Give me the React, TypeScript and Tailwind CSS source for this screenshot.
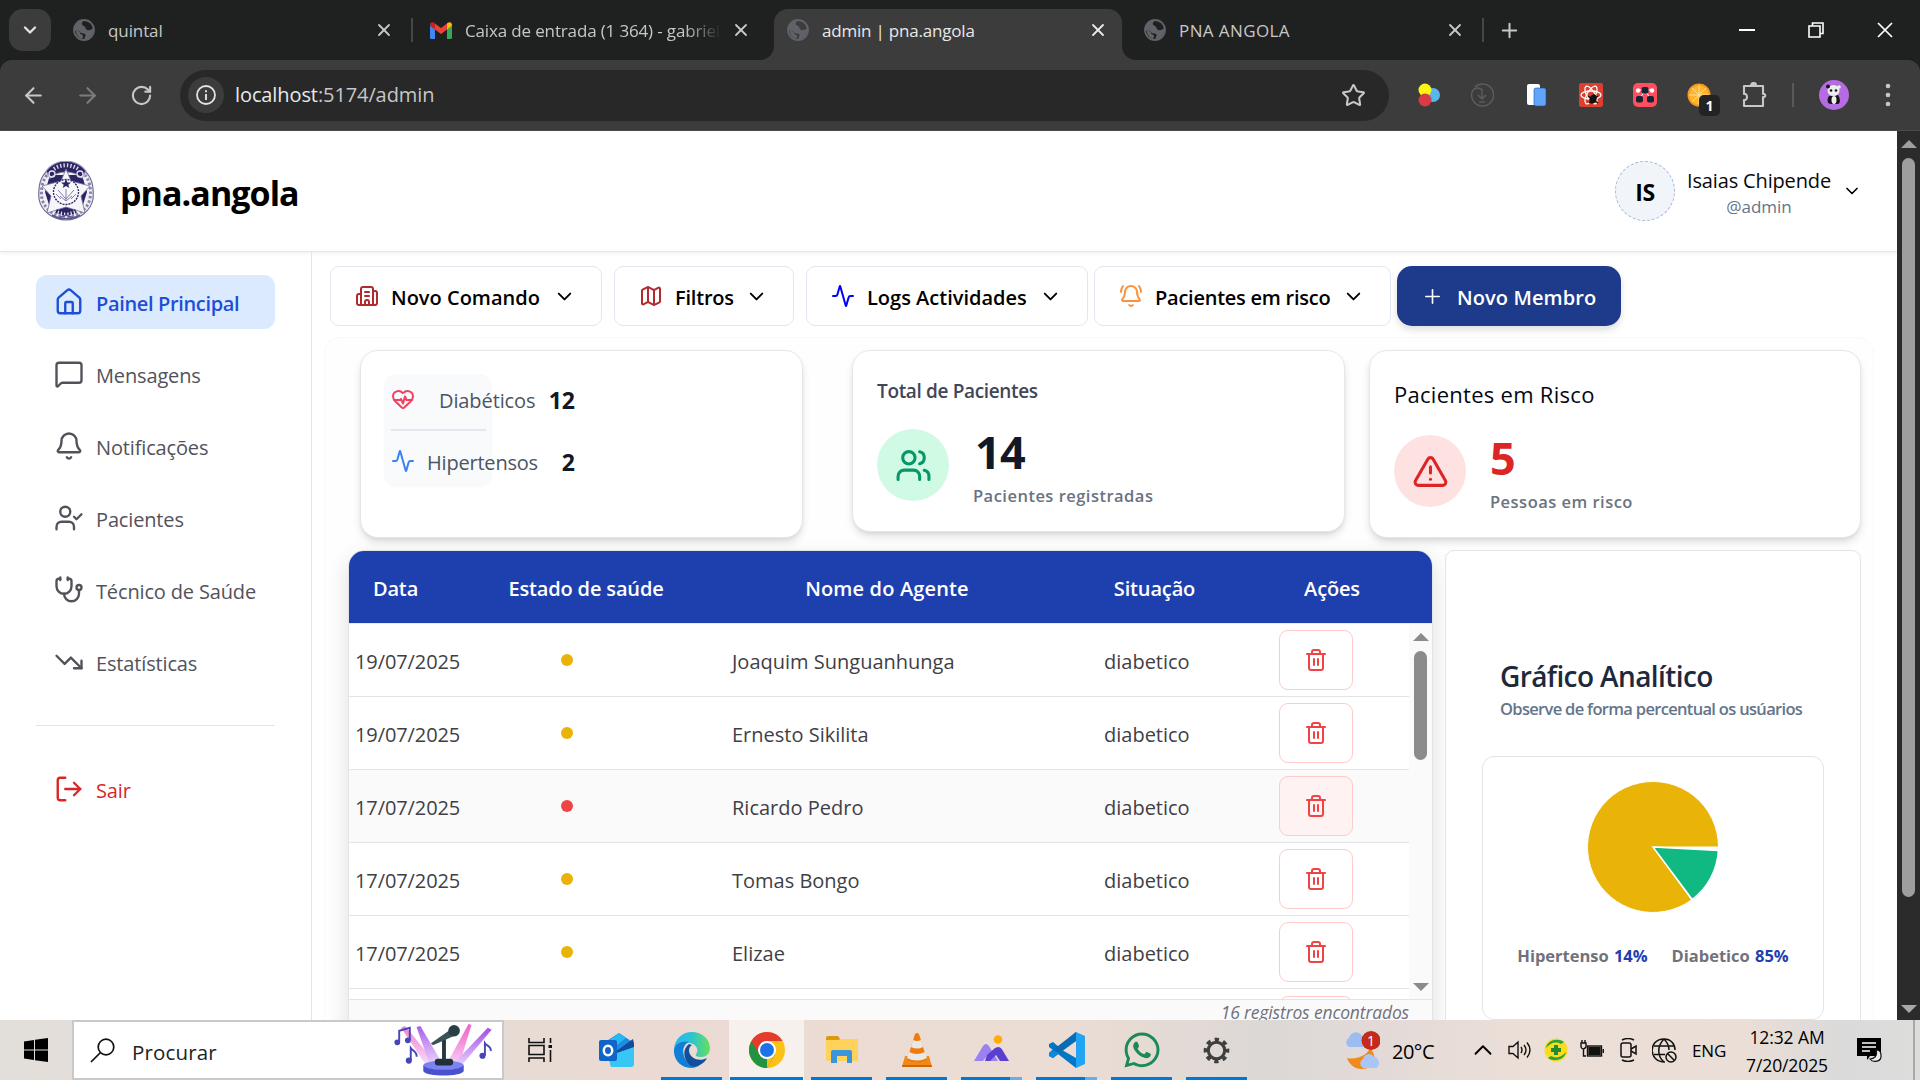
import React from "react";
import {
  Activity, ArrowLeft, ArrowRight, Bell, BellRing, Building2, ChevronDown, ChevronUp, HeartPulse, House,
  LogOut, Map as MapIcon, MessageSquare, Plus, RotateCw, Star, Stethoscope, Trash2,
  TrendingDown, TriangleAlert, UserCheck, Users, X,
} from "lucide-react";
import { FaWhatsapp } from "react-icons/fa";

const BrowserGlobe = () => (
  <svg className="size-[22px] shrink-0" viewBox="0 0 22 22">
    <circle cx="11" cy="11" r="10" fill="none" stroke="#5f6368" strokeWidth="1.8" />
    <path d="M12 1c-4 2-4 5-1 6 2 1 1 3 3 4 3 1 5-1 6-2 1 6-3 11-8 12-2-2 2-4 0-6-2-1-4 0-5-2-1-2-4-1-6-1C1 5 6 0 12 1Z" fill="#5f6368" />
    <path d="M3 12c2 0 4 0 4 2s3 1 3 3-1 2-1 3c-3-1-6-4-6-8Z" fill="#5f6368" />
  </svg>
);

const Gmail = () => (
  <svg className="h-[17px] w-[22px] shrink-0" viewBox="0 0 22 17">
    <path d="M0 3v12.5A1.5 1.5 0 0 0 1.500 17H5V7Z" fill="#4285f4" />
    <path d="M22 3v12.500a1.500 1.500 0 0 1-1.500 1.500H17V7Z" fill="#34a853" />
    <path d="M5 1.500 11 6l6-4.500V7.500l-6 4.500-6-4.500Z" fill="#ea4335" />
    <path d="M0 3C0 .5 2.500-.5 4.500 1L5 1.500v6L0 3.800Z" fill="#c5221f" />
    <path d="M22 3c0-2.500-2.500-3.500-4.500-2L17 1.500v6l5-3.700Z" fill="#fbbc04" />
  </svg>
);

function Tab({ icon, title, cls, textCls }: { icon: React.ReactNode; title: string; cls: string; textCls: string }) {
  return (
    <div className={"flex h-[42px] w-[321px] items-center " + cls}>
      {icon}
      <span className={"relative top-[1px] ml-[13px] min-w-0 flex-1 overflow-hidden whitespace-nowrap text-[17px] " + textCls}>{title}</span>
      <X size={20} strokeWidth={2.2} className="ml-[10px] shrink-0" />
    </div>
  );
}

const Sep = ({ cls }: { cls: string }) => <div className={"w-[2px] shrink-0 " + cls} />;

function Browser() {
  return (
    <header className="h-[131px] bg-[#1f2120]">
      <div className="flex h-[60px] pt-[9px]">
        <div className="ml-[9px] flex size-[42px] items-center justify-center rounded-[14px] bg-[#3c3c3c] text-[#e3e3e3]">
          <ChevronDown size={20} strokeWidth={2.8} />
        </div>
        <Tab icon={<BrowserGlobe />} title="quintal" cls="ml-[22px] text-[#c7c7c7]" textCls="tracking-[-0.1px]" />
        <Sep cls="ml-[17px] mt-[9px] h-6 bg-[#454746]" />
        <Tab icon={<Gmail />} title="Caixa de entrada (1 364) - gabriel" cls="ml-[17px] text-[#c7c7c7]" textCls="tracking-[-0.15px] [mask-image:linear-gradient(to_right,black_86%,transparent)]" />
        <div className="relative ml-[23px] rounded-t-[14px] bg-[#3c3c3c] pl-[13px] pr-[14px]">
          <svg className="absolute bottom-0 -left-[14px] size-[14px]" viewBox="0 0 14 14"><path d="M14 0v14H0A14 14 0 0 0 14 0Z" fill="#3c3c3c" /></svg>
          <svg className="absolute bottom-0 -right-[14px] size-[14px]" viewBox="0 0 14 14"><path d="M0 0v14h14A14 14 0 0 1 0 0Z" fill="#3c3c3c" /></svg>
          <Tab icon={<BrowserGlobe />} title="admin | pna.angola" cls="text-[#e8e8e8]" textCls="tracking-[-0.2px]" />
        </div>
        <Tab icon={<BrowserGlobe />} title="PNA ANGOLA" cls="ml-[22px] text-[#c7c7c7]" textCls="tracking-[0.4px]" />
        <Sep cls="ml-[17px] mt-[9px] h-6 bg-[#454746]" />
        <Plus size={23} strokeWidth={2.1} className="ml-[14px] mt-[10px] text-[#c7c7c7]" />
        <div className="ml-auto flex h-[42px] items-center gap-[53px] pr-[27px]">
          <svg className="h-4 w-4" viewBox="0 0 16 16"><path d="M0 8h16" stroke="white" strokeWidth="2" /></svg>
          <svg className="h-4 w-4" viewBox="0 0 16 16" fill="none" stroke="white" strokeWidth="1.600"><path d="M1 4h11v11H1zM4.500 4V1H15v10.500h-3" /></svg>
          <svg className="h-4 w-4" viewBox="0 0 16 16"><path d="m1 1 14 14M15 1 1 15" stroke="white" strokeWidth="1.700" /></svg>
        </div>
      </div>
      <div className="flex h-[71px] items-center rounded-t-[12px] border-b border-[#4b4b4b] bg-[#3c3c3c] text-[#c7c7c7]">
        <ArrowLeft size={25} strokeWidth={2} className="ml-[21px]" />
        <ArrowRight size={25} strokeWidth={2} className="ml-[29px] text-[#7c7c7c]" />
        <RotateCw size={23} strokeWidth={2.2} className="ml-[30px]" />
        <div className="ml-[27px] flex h-[51px] w-[1209px] items-center rounded-full bg-[#282828] pl-[8px]">
          <div className="flex size-[36px] items-center justify-center rounded-full bg-[#3c3c3c]">
            <svg className="size-[20px]" viewBox="0 0 20 20"><circle cx="10" cy="10" r="9" fill="none" stroke="#e3e3e3" strokeWidth="1.800" /><path d="M10 9v6M10 5.200v2" stroke="#e3e3e3" strokeWidth="1.900" /></svg>
          </div>
          <span className="ml-[11px] text-[20px] tracking-[-0.1px]"><span className="text-[#e8e8e8]">localhost</span>:5174/admin</span>
          <Star size={25} strokeWidth={2} className="ml-auto mr-[23px]" />
        </div>
        <svg className="ml-[28px] size-6" viewBox="0 0 24 24"><circle cx="16" cy="12" r="7" fill="#59b5ea" /><circle cx="8" cy="7" r="6.500" fill="#fdf516" /><circle cx="8" cy="17" r="6.500" fill="#d93a45" /></svg>
        <svg className="ml-[29px] size-6" viewBox="0 0 24 24" fill="none" stroke="#5c5c5c" strokeWidth="1.500"><path d="M5 4a11 11 0 1 1-3 5M12 6v10M8 12l4 4 4-4M9 19h6M2 9a6 6 0 0 1 10-2" /></svg>
        <svg className="ml-[30px] size-6" viewBox="0 0 24 24"><rect x="3" y="1" width="13" height="21" rx="2" fill="white" /><rect x="10" y="5" width="12" height="18" rx="2" fill="#60a5fa" stroke="#1d4f9c" strokeWidth=".6" /></svg>
        <svg className="ml-[31px] size-6" viewBox="0 0 24 24"><rect width="24" height="24" rx="2" fill="#d9402f" /><g fill="none" stroke="white" strokeWidth="1.300"><ellipse cx="12" cy="12" rx="10" ry="4" /><ellipse cx="12" cy="12" rx="10" ry="4" transform="rotate(60 12 12)" /><ellipse cx="12" cy="12" rx="10" ry="4" transform="rotate(120 12 12)" /></g><ellipse cx="14" cy="16" rx="3.500" ry="5" fill="#111" transform="rotate(25 14 16)" /><path d="M9 13l10 7M10 20l9-7" stroke="#111" strokeWidth="1.400" /></svg>
        <svg className="ml-[30px] size-6" viewBox="0 0 24 24"><rect width="24" height="24" rx="5" fill="#ff4f5e" /><path d="M4 7h16M12 8l-6 8M12 8l6 8" stroke="#fff" strokeWidth="1" /><circle cx="5" cy="7.500" r="2.200" fill="#fff" /><circle cx="19" cy="7.500" r="2.200" fill="#fff" /><rect x="8.500" y="4" width="7" height="6.500" rx="2" fill="#162536" /><rect x="3" y="13" width="7" height="6.500" rx="2" fill="#162536" /><rect x="14" y="13" width="7" height="6.500" rx="2" fill="#162536" /></svg>
        <div className="relative ml-[30px] size-6">
          <svg className="size-6" viewBox="0 0 24 24"><circle cx="12" cy="12" r="11.500" fill="#f79a1d" /><circle cx="12" cy="12" r="9.500" fill="#ffb52e" /><path d="M12 2v20M2 12h20M5 5l14 14M19 5 5 19" stroke="#fde0a0" strokeWidth="1" /></svg>
          <div className="absolute left-[12px] top-[12px] flex h-[21px] w-[21px] items-center justify-center rounded-[5px] bg-[#232323] text-[14px] font-bold text-white">1</div>
        </div>
        <svg className="ml-[30px] size-[26px]" viewBox="0 0 26 26" fill="none" stroke="#c7c7c7" strokeWidth="2.100" strokeLinejoin="round"><path d="M3 4h19v8c3-1 3 4 0 3v9H3v-6c4 1 4-7 0-6Z" /><path d="M10 3.500a2.500 2.500 0 0 1 5 0" fill="#c7c7c7" /></svg>
        <Sep cls="ml-[25px] h-6 bg-[#5a5a5a]" />
        <div className="ml-[25px] flex size-[30px] items-center justify-center rounded-full bg-[#b56ce2]">
          <svg className="size-[22px]" viewBox="0 0 22 22"><path d="M6 12c-3 5-1 8 2 8h7c3-1 2-6 0-9Z" fill="#151515" /><ellipse cx="11" cy="16" rx="2.500" ry="4" fill="#eee" /><ellipse cx="10.500" cy="6.500" rx="6" ry="5.500" fill="#eee" /><circle cx="5" cy="2.500" r="2" fill="#151515" /><circle cx="16" cy="3" r="1.800" fill="#eee" /><circle cx="8" cy="6.500" r="1.300" fill="#151515" /><circle cx="13" cy="6.500" r="1.300" fill="#151515" /></svg>
        </div>
        <svg className="ml-[36px] h-[26px] w-[6px]" viewBox="0 0 6 26" fill="#c7c7c7"><circle cx="3" cy="4" r="2.300" /><circle cx="3" cy="13" r="2.300" /><circle cx="3" cy="22" r="2.300" /></svg>
      </div>
    </header>
  );
}

const Crest = () => (
  <svg className="h-[60px] w-[56px]" viewBox="0 0 56 60">
    <path d="M12 8C2 14 0 26 1 38c2 12 14 21 27 21s25-9 27-21c1-12-1-24-11-30Z" fill="#f1f1f6" stroke="#6f6b98" strokeWidth="1.200" />
    <path d="M9 14C3 22 3 30 4 38c3 11 13 18 24 18s21-7 24-18c1-8 1-16-5-24" fill="none" stroke="#8986ad" strokeWidth="3" strokeDasharray="2.500 2" />
    <path d="M12 14h32l5 17-5 16-16 5-16-5-5-16Z" fill="#2b2563" />
    <path d="M8 10C18-3 38-3 48 10l-4 7C35 9 21 9 12 17Z" fill="#2b2563" stroke="#9a97b8" strokeWidth="1.200" />
    <path d="M16 8c7-5 17-5 24 0" fill="none" stroke="#d8d8e4" strokeWidth="4" strokeDasharray="1.400 2" />
    <circle cx="14" cy="13" r="3" fill="none" stroke="#e6e6ee" strokeWidth="1.300" /><circle cx="42" cy="13" r="3" fill="none" stroke="#e6e6ee" strokeWidth="1.300" />
    <path d="m28 8 5 12 19 5-9 10 4 17-19-6-19 6 4-17-9-10 19-5Z" fill="#f5f5fa" stroke="#77739f" strokeWidth=".8" />
    <circle cx="28" cy="31" r="12.500" fill="#f8f8fc" stroke="#2b2563" strokeWidth="1.300" strokeDasharray="2 1" />
    <path d="m28 18 1.500 3.500h3.500l-2.700 2.200 1 3.300-3.300-2-3.300 2 1-3.300-2.700-2.200h3.500Z" fill="#2b2563" />
    <path d="M20 29l8 9 8-9M22 35l6 5 6-5M28 28v12M18 33l5 5M38 33l-5 5" stroke="#827ea8" strokeWidth="1" fill="none" />
    <path d="M18 50c6 3 14 3 20 0" stroke="#2b2563" strokeWidth="4" strokeDasharray="2 1.200" fill="none" />
    <path d="M14 54c8 5 20 5 28 0M20 57l8-3 8 3" stroke="#5b568c" strokeWidth="1.500" fill="none" />
  </svg>
);

const menu = [
  { icon: House, label: "Painel Principal" },
  { icon: MessageSquare, label: "Mensagens" },
  { icon: Bell, label: "Notificações" },
  { icon: UserCheck, label: "Pacientes" },
  { icon: Stethoscope, label: "Técnico de Saúde" },
  { icon: TrendingDown, label: "Estatísticas" },
];

function Sidebar() {
  return (
    <aside className="w-[312px] shrink-0 border-r border-[#e4e4e7] px-[36px] pt-[23px]">
      <nav className="flex flex-col gap-[18px]">
        {menu.map(({ icon: Icon, label }, i) => (
          <div key={label} className={"flex h-[54px] items-center rounded-[11px] pl-[18px] text-[20px] " + (i === 0 ? "bg-[#dbeafe] font-semibold tracking-[-0.35px] text-[#1d4ed8]" : "tracking-[-0.15px] text-[#52525b]")}>
            <Icon size={30} strokeWidth={1.9} className="shrink-0" />
            <span className="ml-[12px] whitespace-nowrap pt-[3px]">{label}</span>
          </div>
        ))}
      </nav>
      <div className="mt-[36px] border-t border-[#e4e4e7]" />
      <div className="mt-[36px] flex h-[54px] items-center pl-[18px] text-[20px] tracking-[-0.15px] text-[#dc2626]">
        <LogOut size={30} strokeWidth={1.9} />
        <span className="ml-[12px] pt-[3px]">Sair</span>
      </div>
    </aside>
  );
}

function ToolButton({ icon: Icon, label, cls, color }: { icon: React.ElementType; label: string; cls: string; color: string }) {
  return (
    <div className={"flex h-[60px] shrink-0 items-center whitespace-nowrap rounded-[9px] border border-[#e2e8f0] pl-[24px] " + cls}>
      <Icon size={24} strokeWidth={2} className={color} />
      <span className="ml-[12px] pt-[3px] text-[20px] font-semibold">{label}</span>
      <ChevronDown size={23} strokeWidth={2} className="ml-auto mr-[25px]" />
    </div>
  );
}

const card = "rounded-[18px] border border-[#e5e7eb] bg-white shadow-[0_5px_8px_-1px_rgba(0,0,0,0.13),0_2px_4px_-2px_rgba(0,0,0,0.1)] ";

function Stat({ cls, title, titleCls, circle, icon, value, valueCls, caption, captionCls }: { cls: string; title: string; titleCls: string; circle: string; icon: React.ReactNode; value: string; valueCls: string; caption: string; captionCls: string }) {
  return (
    <div className={card + "px-[24px] " + cls}>
      <h3 className={titleCls}>{title}</h3>
      <div className="flex">
        <div className={"flex size-[72px] items-center justify-center rounded-full " + circle}>{icon}</div>
        <div className="ml-[24px]">
          <div className={"text-[45px] font-bold leading-[46px] " + valueCls}>{value}</div>
          <div className={"mt-[8px] text-[16.5px] font-semibold leading-[25px] text-[#6b7280] " + captionCls}>{caption}</div>
        </div>
      </div>
    </div>
  );
}

function Cards() {
  return (
    <div className="flex h-[188px] items-start pl-[35px]">
      <div className={card + "h-[188px] w-[443px] pl-[23px] pt-[23px]"}>
        <div className="h-[112px] w-[108px] rounded-[12px] bg-[#f8fafc] px-[7px] shadow-[0_1px_2px_rgba(0,0,0,0.03)]">
          <div className="flex h-[55px] w-[184px] items-center pb-[5px]">
            <HeartPulse size={24} strokeWidth={2} className="shrink-0 text-[#f43f5e]" />
            <span className="ml-[24px] pt-[4px] text-[20px] tracking-[-0.1px] text-[#4b5563]">Diabéticos</span>
            <span className="ml-auto pt-[3px] text-[23px] font-bold text-[#111827]">12</span>
          </div>
          <div className="h-[2px] w-[95px] bg-[#e2e8f0]" />
          <div className="flex h-[54px] w-[184px] items-center pt-[6px]">
            <Activity size={24} strokeWidth={2} className="shrink-0 text-[#3b82f6]" />
            <span className="ml-[12px] pt-[3px] text-[20px] tracking-[-0.2px] text-[#4b5563]">Hipertensos</span>
            <span className="ml-auto pt-[3px] text-[23px] font-bold text-[#111827]">2</span>
          </div>
        </div>
      </div>
      <Stat cls="ml-[49px] h-[182px] w-[493px] pt-[24px]" title="Total de Pacientes" titleCls="h-[54px] pt-[2px] text-[19px] font-semibold tracking-[-0.35px] text-[#3f4757]"
        circle="bg-[#d1fae5]" icon={<Users size={37} strokeWidth={2} className="text-[#059669]" />} value="14" valueCls="tracking-[-0.8px] pl-[2px] text-[#111827]" caption="Pacientes registradas" captionCls="tracking-[0.48px]" />
      <Stat cls="ml-[24px] h-[188px] w-[492px] pt-[24px]" title="Pacientes em Risco" titleCls="h-[60px] pt-[3px] text-[22px] tracking-[0.28px] text-[#030712]"
        circle="bg-[#fee2e2]" icon={<TriangleAlert size={37} strokeWidth={2} className="text-[#dc2626]" />} value="5" valueCls="text-[#dc2626]" caption="Pessoas em risco" captionCls="tracking-[0.48px]" />
    </div>
  );
}

const rows = [
  { date: "19/07/2025", name: "Joaquim Sunguanhunga", risk: false, hover: false },
  { date: "19/07/2025", name: "Ernesto Sikilita", risk: false, hover: false },
  { date: "17/07/2025", name: "Ricardo Pedro", risk: true, hover: true },
  { date: "17/07/2025", name: "Tomas Bongo", risk: false, hover: false },
  { date: "17/07/2025", name: "Elizae", risk: false, hover: false },
];

function Table() {
  return (
    <section className="h-[520px] w-[1085px] shrink-0 overflow-hidden rounded-t-[16px] border border-[#e4e4e7] bg-white shadow-[0_8px_22px_rgba(0,0,0,0.13)]">
      <div className="flex h-[72px] items-center bg-[#1e40af] pt-[4px] text-[20px] font-semibold tracking-[-0.15px] text-white">
        <span className="w-[93px] text-center">Data</span>
        <span className="ml-[60px] w-[168px] text-center">Estado de saúde</span>
        <span className="ml-[130px] w-[174px] text-center tracking-[0.15px]">Nome do Agente</span>
        <span className="ml-[133px] w-[95px] text-center">Situação</span>
        <span className="ml-[86px] w-[88px] text-center">Ações</span>
      </div>
      <div className="flex h-[376px] overflow-hidden border-t border-[#e9e9ec]">
        <div className="w-[1060px]">
          {rows.map((r, i) => (
            <div key={i} className={"flex h-[73px] items-center border-b border-[#e4e4e7] pl-[6px] text-[20px] text-[#3f3f46] " + (r.hover ? "bg-[#fafafa]" : "bg-white")}>
              <span className="w-[206px] pt-[3px] tracking-[-0.1px]">{r.date}</span>
              <span className={"size-[12px] rounded-full " + (r.risk ? "bg-[#ef4444]" : "bg-[#eab308]")} />
              <span className="ml-[159px] w-[372px] pt-[3px]">{r.name}</span>
              <span className="w-[175px] pt-[3px]">diabetico</span>
              <span className={"flex h-[60px] w-[74px] items-center justify-center rounded-[9px] border border-[#fecaca] " + (r.hover ? "bg-[#fef2f2]" : "")}>
                <Trash2 size={24} strokeWidth={2} className="text-[#ef4444]" />
              </span>
            </div>
          ))}
          <div className="flex h-[73px] items-center pl-[930px]">
            <span className="h-[60px] w-[74px] rounded-[9px] border border-[#fecaca]" />
          </div>
        </div>
        <div className="flex flex-1 flex-col items-center bg-[#fafafa] pt-[9px]">
          <svg className="h-[8px] w-[16px]" viewBox="0 0 16 8"><path d="M8 0l8 8H0Z" fill="#8b8b8b" /></svg>
          <div className="mt-[10px] h-[109px] w-[13px] rounded-full bg-[#8b8b8b]" />
          <svg className="mt-[223px] h-[8px] w-[16px]" viewBox="0 0 16 8"><path d="M0 0h16L8 8Z" fill="#8b8b8b" /></svg>
        </div>
      </div>
      <div className="h-[80px] border-t border-[#e4e4e7] bg-[#fafafa] pr-[23px] text-right text-[17.5px] italic leading-[25px] tracking-[-0.15px] text-[#71717a]">16 registros encontrados</div>
    </section>
  );
}

function Chart() {
  return (
    <section className="ml-[12px] h-[530px] w-[416px] rounded-[9px] border border-[#e4e4e7] bg-white">
      <div className="ml-[54px] mt-[105px] whitespace-nowrap">
        <h2 className="text-[28px] font-semibold leading-[40px] tracking-[-0.6px] text-[#1e293b]">Gráfico Analítico</h2>
        <p className="text-[16.5px] font-semibold leading-[25px] tracking-[-0.68px] text-[#64748b]">Observe de forma percentual os usúarios</p>
      </div>
      <div className="ml-[36px] mt-[35px] h-[264px] w-[342px] rounded-[12px] border border-[#e4e4e7] pt-[23px]">
        <svg className="mx-auto block size-[134px]" viewBox="-67 -67 134 134">
          <path d="M0 0H65.500A65.500 65.500 0 1 0 38.600 52.900Z" fill="#eab308" stroke="#fff" strokeWidth="1" />
          <path d="M0 0 65.400 3.400A65.500 65.500 0 0 1 39.200 52.500Z" fill="#10b981" stroke="#fff" strokeWidth="1.500" />
        </svg>
        <div className="mt-[29px] flex justify-center gap-[24px] whitespace-nowrap text-[16.5px] font-bold leading-[25px] tracking-[-0.02px] text-[#71717a]">
          <span>Hipertenso <span className="ml-[1px] text-[#1e40af]">14%</span></span>
          <span>Diabetico <span className="ml-[1px] text-[#1e40af]">85%</span></span>
        </div>
      </div>
    </section>
  );
}

function PageScroll() {
  return (
    <div className="flex w-[23px] shrink-0 flex-col items-center bg-[#2b2b2b] pt-[9px]">
      <svg className="h-[8px] w-[16px]" viewBox="0 0 16 8"><path d="M8 0l8 8H0Z" fill="#9e9e9e" /></svg>
      <div className="mt-[10px] h-[739px] w-[13px] rounded-full bg-[#9e9e9e]" />
      <svg className="mt-[108px] h-[8px] w-[16px]" viewBox="0 0 16 8"><path d="M0 0h16L8 8Z" fill="#a8a8a8" /></svg>
    </div>
  );
}

function Page() {
  return (
    <div className="flex h-[889px] bg-white">
      <div className="flex min-w-0 flex-1 flex-col">
        <div className="flex h-[121px] shrink-0 items-center border-b border-[#e5e7eb] pl-[38px] pr-[39px] shadow-[0_1px_4px_rgba(0,0,0,0.08)]">
          <Crest />
          <span className="ml-[26px] pt-[4px] text-[34px] font-bold tracking-[-0.95px] text-black">pna.angola</span>
          <div className="ml-auto flex size-[60px] items-center justify-center rounded-full border border-dashed border-[#a5b4dc] bg-[#f1f5f9] pt-[3px] text-[23px] font-bold tracking-[-0.5px] text-black">IS</div>
          <div className="ml-[12px] flex w-[144px] flex-col items-center whitespace-nowrap pt-[5px]">
            <span className="text-[20px] leading-[26px] tracking-[-0.15px] text-[#09090b]">Isaias Chipende</span>
            <span className="text-[17px] leading-[26px] text-[#64748b]">@admin</span>
          </div>
          <ChevronDown size={20} strokeWidth={2} className="ml-[11px] -mr-[4px] text-black" />
        </div>
        <div className="flex h-[768px] overflow-hidden">
          <Sidebar />
          <main className="min-w-0 flex-1">
            <div className="flex h-[74px] pl-[18px] pt-[14px] text-black">
              <ToolButton icon={Building2} label="Novo Comando" cls="w-[272px] tracking-[0px]" color="text-[#b02a30]" />
              <ToolButton icon={MapIcon} label="Filtros" cls="ml-[12px] w-[180px] tracking-[-0.2px]" color="text-[#b02a30]" />
              <ToolButton icon={Activity} label="Logs Actividades" cls="ml-[12px] w-[282px] tracking-[0px]" color="text-[#0000ff]" />
              <ToolButton icon={BellRing} label="Pacientes em risco" cls="ml-[6px] w-[297px] tracking-[-0.25px]" color="text-[#fb923c]" />
              <div className="ml-[6px] flex h-[60px] w-[224px] items-center rounded-[15px] bg-[#1e3a8a] pl-[24px] text-white shadow-[0_4px_7px_rgba(0,0,0,0.13)]">
                <Plus size={23} strokeWidth={1.7} />
                <span className="ml-[13px] whitespace-nowrap pt-[3px] text-[20px] font-semibold tracking-[0.1px]">Novo Membro</span>
              </div>
            </div>
            <div className="ml-[12px] mt-[11px] h-[800px] w-[1550px] rounded-t-[16px] border border-[#f9f9fb] bg-[#fefefe] pt-[12px]">
              <Cards />
              <div className="mt-[12px] flex pl-[23px]">
                <Table />
                <Chart />
              </div>
            </div>
          </main>
        </div>
      </div>
      <PageScroll />
    </div>
  );
}

const Outlook = () => (
  <svg className="size-9" viewBox="0 0 36 36"><path d="M6 10 20 1l15 10v20a3 3 0 0 1-3 3H12Z" fill="#1a8fe0" /><path d="M6 11 20 1l7 5-17 13Z" fill="#26b8f2" /><path d="m16 20 18-13 1 5v8l-19 9Z" fill="#114a9f" /><path d="M9 24l26-9v17a3 3 0 0 1-3 3H12Z" fill="#38c6f4" /><rect y="8" width="18" height="21" rx="2" fill="#1066c8" /><ellipse cx="9" cy="18.500" rx="4.200" ry="4.800" fill="none" stroke="#fff" strokeWidth="2.500" /></svg>
);
const Edge = () => (
  <svg className="size-9" viewBox="0 0 36 36">
    <defs><linearGradient id="ed" x1="0" x2="1"><stop offset="0" stopColor="#2bb3f0" /><stop offset=".5" stopColor="#2cc5d0" /><stop offset="1" stopColor="#66e05a" /></linearGradient></defs>
    <path d="M0 17C1 6 9 0 18 0c10 0 18 7 18 16 0 6-4 9-9 9-4 0-6-1-5-3 3-3 1-10-6-11C8 10 3 13 0 17Z" fill="url(#ed)" />
    <path d="M0 17C2 11 9 8 15 10c-5 2-7 8-5 14 2 7 9 11 15 10C12 40-1 31 0 17Z" fill="#0f7fd8" />
    <path d="M15 12c-7 5-6 16 2 22 6 2 13-2 16-8-7 4-17 1-18-7 0-3 1-5 3-6Z" fill="#114e9c" />
  </svg>
);
const Chrome = () => (
  <svg className="size-9" viewBox="0 0 36 36"><circle cx="18" cy="18" r="18" fill="#fbc116" /><path d="M2.400 9A18 18 0 0 0 18 36l8-13.500-8-4.500Z" fill="#229342" /><path d="M18 36 25.800 22.500 33.600 9H18v9Z" fill="#fbc116" /><path d="M2.400 9A18 18 0 0 1 33.600 9H18L10 22Z" fill="#e33b2e" /><circle cx="18" cy="18" r="9" fill="#fff" /><circle cx="18" cy="18" r="7" fill="#1a73e8" /></svg>
);
const Folder = () => (
  <svg className="h-[28px] w-8" viewBox="0 0 32 28"><path d="M0 2a2 2 0 0 1 2-2h10l3 4H0Z" fill="#d99a0b" /><path d="M0 4h12l3-1h16a1 1 0 0 1 1 1v20a1 1 0 0 1-1 1H1a1 1 0 0 1-1-1Z" fill="#ffd35a" /><path d="M5 27V16a2 2 0 0 1 2-2h17a2 2 0 0 1 2 2v11h-5v-7H11v7Z" fill="#3a95dd" /></svg>
);
const Vlc = () => (
  <svg className="h-[36px] w-8" viewBox="0 0 32 36"><path d="M4 24h24l3 11H1Z" fill="#f08a16" /><path d="M14 2q2-2 4 0l8 26q-10 5-20 0Z" fill="#f27a0c" /><path d="m12 8-2 7q6 3 12 0l-2-7q-4 2-8 0ZM8 20l-2 6q10 5 20 0l-2-6q-8 4-16 0Z" fill="#e8e8e8" /><path d="M1 34h30" stroke="#c45d0b" strokeWidth="1.500" /></svg>
);
const Peaks = () => (
  <svg className="-mt-[4px] h-[27px] w-[35px]" viewBox="0 0 35 27"><path d="M0 26 9 11q3-4 6 0l9 15h-8l-3-5-4 5Z" fill="#9b80f2" /><path d="m13 20 8-7 3-1q3 0 5 4l6 10h-9l-4-6-6 6h-5Z" fill="#5b3fd0" /><circle cx="24" cy="4.500" r="4.300" fill="#ffab08" /></svg>
);
const VsCode = () => (
  <svg className="size-9" viewBox="0 0 36 36"><path d="m27 0-17 15-6-5-4 2v3l27 21V26L13 18 27 9Z" fill="#0078c8" /><path d="M27 9 4 26l-4-2v-3L27 0Z" fill="#0a6cb4" /><path d="m10 21-6 5-4-2v-3l3-3Z" fill="#0a8ade" /><path d="m27 0 9 4v28l-9 4Z" fill="#22a4f2" /></svg>
);
const Gear = () => (
  <svg className="size-[27px]" viewBox="-14 -14 28 28" fill="none" stroke="#3f3f3f"><circle r="8.500" strokeWidth="3.200" /><circle r="11.500" strokeWidth="3.600" strokeDasharray="4.500 4.530" strokeDashoffset="2.250" /></svg>
);

const apps = [
  { el: <Outlook />, bar: "" },
  { el: <Edge />, bar: "full" },
  { el: <Chrome />, bar: "active" },
  { el: <Folder />, bar: "full" },
  { el: <Vlc />, bar: "full" },
  { el: <Peaks />, bar: "multi" },
  { el: <VsCode />, bar: "multi" },
  { el: <FaWhatsapp size={40} color="#1b8a55" />, bar: "full" },
  { el: <Gear />, bar: "full" },
];

const Stage = () => (
  <svg className="h-[52px] w-[101px]" viewBox="0 0 104 54">
    <defs>
      <linearGradient id="b1" x1="0" y1="0" x2="0" y2="1"><stop offset="0" stopColor="#f05fc8" /><stop offset="1" stopColor="#f6d4f7" /></linearGradient>
      <linearGradient id="b2" x1="0" y1="0" x2="0" y2="1"><stop offset="0" stopColor="#a24be8" /><stop offset="1" stopColor="#ecd5fb" /></linearGradient>
    </defs>
    <path d="M8 4l4-2 34 41H34Z" fill="url(#b1)" opacity=".8" /><path d="M24 3l4-1 24 41H38Z" fill="url(#b2)" opacity=".9" />
    <path d="M78 0l3 1-13 43H54Z" fill="url(#b1)" /><path d="M98 4l4 2-32 38H60Z" fill="url(#b2)" />
    <ellipse cx="52" cy="43" rx="21" ry="5" fill="#7b83f2" /><path d="M31 43v6c4 6 38 6 42 0v-6c-6 6-36 6-42 0Z" fill="#4b50d0" />
    <rect x="43" y="36" width="19" height="7" rx="3" fill="#1f3138" /><rect x="50.500" y="14" width="4" height="24" fill="#24373e" />
    <path d="m39 20 20-14 5 6-23 10Z" fill="#3a5158" /><circle cx="63" cy="7" r="6" fill="#2a3e45" />
    <g fill="#4745b8" stroke="#4745b8" strokeWidth="2"><path d="M6 18V7l11-3v13" fill="none" /><circle cx="4" cy="19" r="2" /><circle cx="15" cy="17" r="2" /><path d="M18 38V25c2 3 7 4 6 9" fill="none" /><circle cx="16" cy="38" r="2.200" /><path d="M95 33V20c2 3 7 3 6 8" fill="none" /><circle cx="92.500" cy="33" r="2.200" /></g>
  </svg>
);

function Taskbar() {
  return (
    <footer className="flex h-[60px] items-center bg-[linear-gradient(90deg,#e2ded9_0%,#e6dcd5_26%,#eadad3_32%,#ecddd4_55%,#dcd8d6_66%,#e3dad8_72%,#ecdfd7_80%,#eaded6_91%,#dadada_96%,#dddddc_100%)] text-black">
      <svg className="ml-[24px] size-6 shrink-0" viewBox="0 0 24 24"><path d="M0 3.500 10 2v9.500H0ZM11 1.800 24 0v11.500H11ZM0 12.500h10V22L0 20.500ZM11 12.500h13V24l-13-1.800Z" /></svg>
      <div className="ml-[24px] flex h-[60px] w-[432px] shrink-0 items-center border-2 border-[#c9c9c9] bg-white pl-[16px] pr-[8px]">
        <svg className="size-[25px]" viewBox="0 0 25 25" fill="none" stroke="#111" strokeWidth="1.700"><circle cx="16" cy="9" r="7.800" /><path d="M10.500 14.500 1 24" /></svg>
        <span className="ml-[17px] pt-[4px] text-[20.5px] tracking-[0.15px] text-[#222]">Procurar</span>
        <div className="ml-auto"><Stage /></div>
      </div>
      <svg className="ml-[24px] mr-[27px] size-6 shrink-0" viewBox="0 0 24 24" fill="none" stroke="#111" strokeWidth="1.600"><path d="M1 0v4.500h15V0M1 24v-4h15v4M1 7.500h15v9H1ZM22.500 0v5M22.500 12v12" /><path d="M20.500 8.500h4" strokeWidth="3" /></svg>
      {apps.map((a, i) => (
        <div key={i} className={"relative flex h-[60px] w-[75px] shrink-0 items-center justify-center " + (a.bar === "active" ? "bg-white/60" : "")}>
          {a.el}
          {a.bar && (
            <div className={"absolute bottom-0 flex h-[3px] " + (a.bar === "active" ? "w-[73px]" : "w-[61px]")}>
              <div className="flex-1 bg-[#0078d7]" />
              {a.bar === "multi" && <div className="w-3 bg-[#69aee6]" />}
            </div>
          )}
        </div>
      ))}
      <svg className="ml-[90px] h-[40px] w-[36px] shrink-0" viewBox="0 0 36 40">
        <path d="M3 28c8 2 20-2 23-10 8 8 5 21-8 21-8 0-13-5-15-11Z" fill="#f08a1c" />
        <path d="M5 17a5 5 0 0 1 0-9 7 7 0 0 1 13-2c4 0 6 4 5 8 0 2-2 3-4 3Z" fill="#9dbdf2" /><path d="M19 38a5 5 0 0 1 0-9 6 6 0 0 1 11-2c6 0 7 11 1 11Z" fill="#a9c6f5" />
        <circle cx="27" cy="10.500" r="9.500" fill="#c42b1c" /><text x="27" y="15.500" textAnchor="middle" fontSize="14" fill="#fff">1</text>
      </svg>
      <span className="ml-[12px] w-[45px] whitespace-nowrap pt-[4px] text-[20px] tracking-[-0.5px]">20°C</span>
      <ChevronUp size={30} strokeWidth={1.500} className="ml-[31px] shrink-0" />
      <svg className="ml-[10px] size-[24px] shrink-0" viewBox="0 0 24 24" fill="none" stroke="#111" strokeWidth="1.400"><path d="M1 8.500h4L10 4v16l-5-4.500H1ZM13 9q2 3 0 6M16 7q4 5 0 10M19 4.500q6 7.500 0 15" /></svg>
      <svg className="ml-[12px] size-[24px] shrink-0" viewBox="0 0 24 24"><circle cx="12" cy="12" r="11.500" fill="#fbdc1c" /><path d="M2 10C3 3 13-1 20 4l-3 2C12 3 6 5 2 10ZM22 14c-1 7-11 11-18 6l3-2c5 3 11 1 15-4Z" fill="#2aa33c" /><path d="M12 7v10M7 12h10" stroke="#1d8c33" strokeWidth="4" /></svg>
      <svg className="ml-[12px] size-[24px] shrink-0" viewBox="0 0 24 24" fill="none" stroke="#111" strokeWidth="1.400"><path d="M1 5v4q2 4 5 0V5ZM2 5V2M5 5V2M3.500 11v7H6" /><rect x="7.500" y="8" width="14" height="10" /><rect x="9" y="9.500" width="11" height="7" fill="#111" /><path d="M23.300 11v4" /></svg>
      <svg className="ml-[13px] size-[24px] shrink-0" viewBox="0 0 24 24" fill="none" stroke="#111" strokeWidth="1.500"><rect x="4" y="5" width="10" height="14" rx="2" /><path d="m14 11 5-3v8l-5-3M5 2q6-3 12 0M5 22q6 3 12 0" /></svg>
      <svg className="ml-[11px] size-[25px] shrink-0" viewBox="0 0 25 25" fill="none" stroke="#111" strokeWidth="1.500"><path d="M13 24C-4 24-4 1 12 1c7 0 11 5 11 11M12 1C5 8 5 18 12 24M12 1c4 4 5 8 5 11M2 8h20M2 16.500h11" /><circle cx="19" cy="19" r="5" /><path d="m15.500 15.500 7 7" /></svg>
      <span className="ml-[15px] w-[35px] pt-[2px] text-[17px] tracking-[-0.1px]">ENG</span>
      <div className="ml-[17px] w-[86px] shrink-0 whitespace-nowrap pt-[1px] text-center text-[17.5px] leading-[28px] tracking-[-0.1px]">
        <div>12:32 AM</div>
        <div>7/20/2025</div>
      </div>
      <svg className="ml-[27px] size-[26px] shrink-0" viewBox="0 0 26 26"><path d="M0 1h24v18H13l-3 4v-4H0Z" fill="#000" /><path d="M5 6h14M5 10h14M5 14h8" stroke="#fff" strokeWidth="1.400" /><path d="M19 13c2 6-2 9-6 9 3 4 12 3 11-4 0-3-2-5-5-5Z" fill="#eee" stroke="#111" strokeWidth="1.200" /></svg>
      <div className="ml-auto mr-[5px] h-[60px] w-[2px] bg-[#a9a9a9]" />
    </footer>
  );
}

export default function App() {
  return (
    <div className="h-[1080px] w-[1920px] overflow-hidden bg-white font-['Open_Sans',sans-serif]">
      <Browser />
      <Page />
      <Taskbar />
    </div>
  );
}
